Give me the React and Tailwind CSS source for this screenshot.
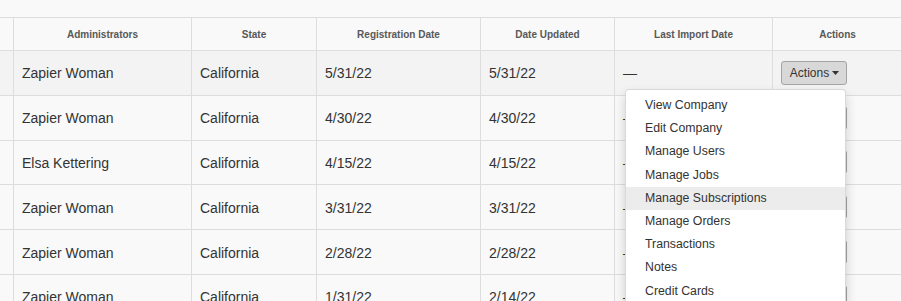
import React from "react";

const rows = [
  ["Zapier Woman", "California", "5/31/22", "5/31/22"],
  ["Zapier Woman", "California", "4/30/22", "4/30/22"],
  ["Elsa Kettering", "California", "4/15/22", "4/15/22"],
  ["Zapier Woman", "California", "3/31/22", "3/31/22"],
  ["Zapier Woman", "California", "2/28/22", "2/28/22"],
  ["Zapier Woman", "California", "1/31/22", "2/14/22"],
];

const menu = [
  "View Company",
  "Edit Company",
  "Manage Users",
  "Manage Jobs",
  "Manage Subscriptions",
  "Manage Orders",
  "Transactions",
  "Notes",
  "Credit Cards",
];

function Caret() {
  return (
    <svg width="7" height="4" viewBox="0 0 7 4" className="ml-[3px]">
      <path d="M0 0 L7 0 L3.5 4 Z" fill="#333" />
    </svg>
  );
}

export default function App() {
  return (
    <div
      className="relative w-[901px] h-[301px] overflow-hidden bg-[#f9f9f9] pt-[17px] text-[#333]"
      style={{ fontFamily: '"Liberation Sans", Arial, sans-serif' }}
    >
      <div className="w-[1100px]">
        <div className="flex h-[34px] border-t border-b border-[#dddddd] text-[10px] font-bold text-[#585858]">
          <div className="w-[14px] shrink-0 border-r border-[#dddddd]" />
          <div className="w-[178px] shrink-0 border-r border-[#dddddd] flex items-center justify-center">Administrators</div>
          <div className="w-[125px] shrink-0 border-r border-[#dddddd] flex items-center justify-center">State</div>
          <div className="w-[164px] shrink-0 border-r border-[#dddddd] flex items-center justify-center">Registration Date</div>
          <div className="w-[134px] shrink-0 border-r border-[#dddddd] flex items-center justify-center">Date Updated</div>
          <div className="w-[158px] shrink-0 border-r border-[#dddddd] flex items-center justify-center">Last Import Date</div>
          <div className="w-[129px] shrink-0 flex items-center justify-center">Actions</div>
        </div>
        {rows.map((r, i) => (
          <div
            key={i}
            className={`flex h-[44.8px] border-b border-[#dddddd] text-[14px] ${i === 0 ? "bg-[#f3f3f3]" : ""}`}
          >
            <div className="w-[14px] shrink-0 border-r border-[#dddddd]" />
            <div className="w-[178px] shrink-0 border-r border-[#dddddd] flex items-center pl-[8px] pt-[2px]">{r[0]}</div>
            <div className="w-[125px] shrink-0 border-r border-[#dddddd] flex items-center pl-[8px] pt-[2px]">{r[1]}</div>
            <div className="w-[164px] shrink-0 border-r border-[#dddddd] flex items-center pl-[8px] pt-[2px]">{r[2]}</div>
            <div className="w-[134px] shrink-0 border-r border-[#dddddd] flex items-center pl-[8px] pt-[2px]">{r[3]}</div>
            <div className="w-[158px] shrink-0 border-r border-[#dddddd] flex items-center pl-[8px] pt-[2px]">—</div>
            <div className="w-[200px] shrink-0 flex items-center pl-[8px]">
              <button className="flex items-center h-[24px] w-[66px] justify-center rounded-[3px] border border-[#a4a4a4] bg-[#d8d8d8] text-[12px] text-[#333] pl-[1px]">
                Actions
                <Caret />
              </button>
            </div>
          </div>
        ))}
      </div>

      <div className="absolute left-[625px] top-[89px] w-[221px] bg-white border border-[rgba(0,0,0,0.15)] rounded-[4px] shadow-[0_6px_12px_rgba(0,0,0,0.175)] py-[4px] text-[12.3px] text-[#333]">
        {menu.map((m) => (
          <div
            key={m}
            className={`px-[19px] h-[23.2px] leading-[23px] whitespace-nowrap ${m === "Manage Subscriptions" ? "bg-[#ececec]" : ""}`}
          >
            {m}
          </div>
        ))}
      </div>
    </div>
  );
}
